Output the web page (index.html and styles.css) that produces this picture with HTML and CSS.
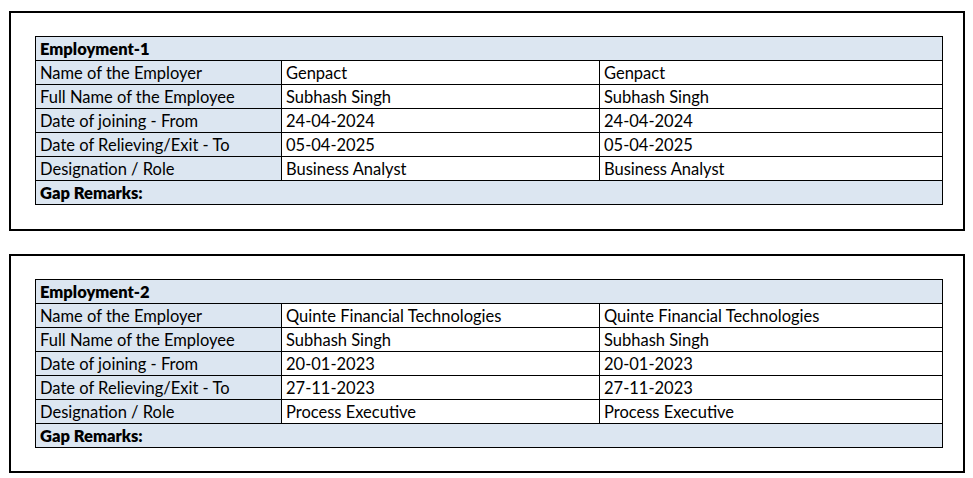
FILE: index.html
```html
<!DOCTYPE html>
<html>
<head>
<meta charset="utf-8">
<link rel="stylesheet" href="styles.css">
</head>
<body>
<div class="panel">
  <table class="emp">
    <colgroup><col class="c1"><col class="c2"><col class="c3"></colgroup>
    <tr class="head"><td colspan="3">Employment-1</td></tr>
    <tr><td class="label">Name of the Employer</td><td>Genpact</td><td>Genpact</td></tr>
    <tr><td class="label">Full Name of the Employee</td><td>Subhash Singh</td><td>Subhash Singh</td></tr>
    <tr><td class="label">Date of joining - From</td><td>24-04-2024</td><td>24-04-2024</td></tr>
    <tr><td class="label">Date of Relieving/Exit - To</td><td>05-04-2025</td><td>05-04-2025</td></tr>
    <tr><td class="label">Designation / Role</td><td>Business Analyst</td><td>Business Analyst</td></tr>
    <tr class="head"><td colspan="3">Gap Remarks:</td></tr>
  </table>
</div>
<div class="panel second">
  <table class="emp">
    <colgroup><col class="c1"><col class="c2"><col class="c3"></colgroup>
    <tr class="head"><td colspan="3">Employment-2</td></tr>
    <tr><td class="label">Name of the Employer</td><td>Quinte Financial Technologies</td><td>Quinte Financial Technologies</td></tr>
    <tr><td class="label">Full Name of the Employee</td><td>Subhash Singh</td><td>Subhash Singh</td></tr>
    <tr><td class="label">Date of joining - From</td><td>20-01-2023</td><td>20-01-2023</td></tr>
    <tr><td class="label">Date of Relieving/Exit - To</td><td>27-11-2023</td><td>27-11-2023</td></tr>
    <tr><td class="label">Designation / Role</td><td>Process Executive</td><td>Process Executive</td></tr>
    <tr class="head"><td colspan="3">Gap Remarks:</td></tr>
  </table>
</div>
</body>
</html>
```
FILE: styles.css
```css
html, body {
  margin: 0;
  padding: 0;
  background: #ffffff;
}
body {
  padding: 11px 0 0 9px;
  font-family: Lato, "Liberation Sans", sans-serif;
  font-size: 16.5px;
  color: #000;
}
.panel {
  box-sizing: border-box;
  width: 956px;
  height: 220px;
  border: 2px solid #000;
  padding: 23px 0 0 24px;
}
.panel.second {
  margin-top: 23px;
  height: 219px;
}
.emp {
  border-collapse: collapse;
  table-layout: fixed;
  width: 907px;
}
.c1 { width: 246px; }
.c2 { width: 318px; }
.c3 { width: 343px; }
.emp td {
  border: 1px solid #000;
  height: 24px;
  padding: 2px 0 0 4px;
  box-sizing: border-box;
  line-height: 21px;
  white-space: nowrap;
  vertical-align: top;
  overflow: hidden;
}
.emp td.label,
.emp tr.head td {
  background: #dce6f1;
}
.emp tr.head td {
  font-weight: 800;
}
```
